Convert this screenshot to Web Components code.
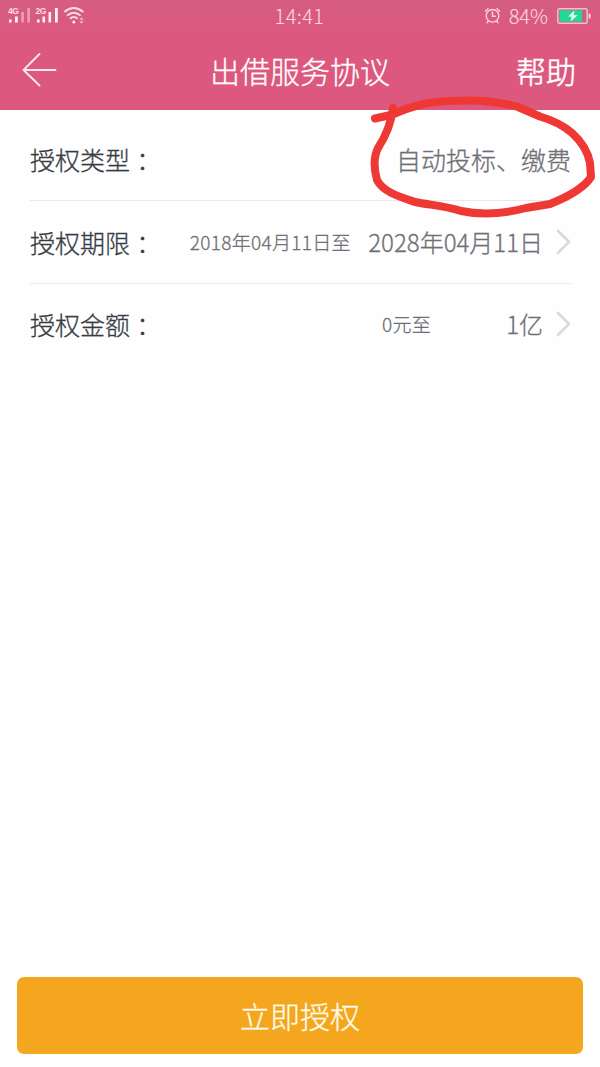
<!DOCTYPE html>
<html lang="zh-CN">
<head>
<meta charset="utf-8">
<title>出借服务协议</title>
<style>
html,body{margin:0;height:100%}
body{background:#fefefe;font-family:"Noto Sans CJK SC","Noto Sans",sans-serif;font-weight:300;-webkit-text-stroke:.3px currentColor}
</style>
</head>
<body>
<agreement-page></agreement-page>
<script>
function define(name, html) {
  const t = document.createElement('template');
  t.innerHTML = html;
  customElements.define(name, class extends HTMLElement {
    constructor() {
      super();
      this.attachShadow({mode: 'open'}).appendChild(t.content.cloneNode(true));
    }
  });
}

define('status-bar', `
<style>
:host{display:grid;grid-template-columns:1fr auto 1fr;align-items:center;height:32px;padding:0 9px 0 8px;color:#f9d3df;box-sizing:border-box;font-size:20px;line-height:32px;-webkit-text-stroke-width:.15px}
.l,.r{display:flex;align-items:center}
.r{justify-content:flex-end}
svg{display:block}
.time{letter-spacing:.4px}
.g{font:bold 8.500px "Liberation Sans",sans-serif;fill:#fbdde6;letter-spacing:-.5px;-webkit-text-stroke-width:0}
.pct{margin:0 9px 0 8px}
</style>
<div class="l">
<svg width="80" height="32" viewBox="8 0 80 32">
  <g fill="#fff0f5"><rect x="9" y="19.5" width="2.6" height="3"/><rect x="15" y="16.5" width="2.8" height="6"/>
  <rect x="37" y="19.5" width="2.6" height="3"/><rect x="42.5" y="16.5" width="2.6" height="6"/><rect x="48.5" y="12" width="2.6" height="10.5"/><rect x="55" y="8" width="2.8" height="14.5"/></g>
  <g fill="#ed9db7"><rect x="21.300" y="12" width="2.6" height="10.500"/><rect x="27.300" y="8" width="2.600" height="14.500"/></g>
  <text class="g" x="8" y="13.500">4G</text><text class="g" x="35.500" y="13.500">2G</text>
  <g fill="none" stroke="#fbdde6" stroke-width="1.900"><path d="M64.300 12Q73.800 4.200 83.300 12M67 15.600Q73.800 9.800 80.600 15.600M70 18.800Q73.800 15.400 77.600 18.800"/></g>
  <circle cx="73.800" cy="22" r="1.500" fill="#fff0f5"/>
  <path d="M79.300 19.800L81.500 17.300 83.700 19.800ZM79.300 21.300L81.500 23.800 83.700 21.300Z" fill="#f2b4c8"/>
</svg></div>
<span class="time">14:41</span>
<div class="r">
<svg width="17" height="18" viewBox="0 0 17 18" fill="none" stroke="#f9d3df" stroke-width="1.400" stroke-linecap="round"><circle cx="8.500" cy="8.800" r="6.300"/><path d="M8.500 5V9.300H11.300M1.300 4.200L4 1.800M15.700 4.200L13 1.800M4.300 14L3 15.700M12.700 14L14 15.700"/></svg>
<span class="pct">84%</span>
<svg width="34" height="16" viewBox="0 0 34 16"><rect x=".8" y=".8" width="29.400" height="14.400" rx="1.500" fill="none" stroke="#f3c0cf" stroke-width="1.400"/><rect x="2.400" y="2.400" width="22.600" height="11.200" fill="#20d995"/><rect x="25" y="2.400" width="3.600" height="11.200" fill="#bd6583"/><rect x="31.600" y="5.800" width="2" height="4.600" fill="#f9d3df"/><path d="M17.500 2.500L11 8.500H14.700L13.500 13.500 20.500 7.300H16.500Z" fill="#f5fff9"/></svg>
</div>`);

define('back-arrow', `
<style>:host{display:block}svg{display:block}</style>
<svg width="35" height="34" viewBox="0 0 35 34" fill="none" stroke="#ffe9f0" stroke-width="1.800" stroke-linecap="round" stroke-linejoin="round"><path d="M17.500 1L1.500 17 17.500 32.500M1.500 17H33.500"/></svg>`);

define('nav-bar', `
<style>
:host{display:grid;grid-template-columns:1fr auto 1fr;align-items:center;height:78px;padding:0 24px 2px 22px;box-sizing:border-box;color:#fff;font-size:30px;line-height:44px}
.title{padding-left:2px}
.help{justify-self:end;-webkit-text-stroke-width:.55px}
</style>
<back-arrow></back-arrow><span class="title"><slot></slot></span><span class="help"><slot name="action"></slot></span>`);

define('app-header', `
<style>:host{display:block;height:110px;background:linear-gradient(#d65d83,#dc587e 34px)}</style><slot></slot>`);

define('form-row', `
<style>
:host{display:flex;align-items:center;height:82.500px;border-bottom:1px solid #e9e9eb;box-sizing:border-box;color:#6e7076;font-size:24px;line-height:36px}
:host([first]){height:91px;padding-top:8px;font-size:25px}
:host([last]){border-bottom-color:transparent}
.label{flex:1;color:#373b43;font-size:25px;white-space:nowrap}
</style>
<span class="label"><slot name="label"></slot></span><slot></slot>`);

define('label-colon', `
<style>:host{display:inline-block;line-height:1;vertical-align:-1px;font-family:"Noto Sans CJK TC",sans-serif}</style><span lang="zh-TW"><slot></slot></span>`);

define('range-start', `
<style>:host{display:block;font-size:19px;letter-spacing:.3px;margin-right:var(--gap,17.500px)}</style><slot></slot>`);

define('row-chevron', `
<style>:host{display:block;margin-left:13px}svg{display:block}</style>
<svg width="15" height="26" viewBox="0 0 15 26" fill="none" stroke="#d8d9dc" stroke-width="2.600" stroke-linecap="round" stroke-linejoin="round"><path d="M2 2L13 12.800 2 23.800"/></svg>`);

define('primary-button', `
<style>
:host{display:block}
button{display:block;width:100%;height:77px;border:0;border-radius:7px;background:#f4a61f;color:#fffbe9;font:300 30px/44px "Noto Sans CJK SC",sans-serif;padding:0 0 1px}
</style><button><slot></slot></button>`);

define('ink-circle', `
<style>:host{position:absolute;left:0;top:0;pointer-events:none}svg{display:block}</style>
<svg width="600" height="230" fill="none" stroke="#ee3834" stroke-width="8" stroke-linecap="round" stroke-linejoin="round"><path d="M375 118.500L393 114.500C402 110 415 106 425 103.500C440 101 454 100.500 468 100.500C485 100.500 504 103 518 107L540 116.500C552 120 564 126 572 133C581 141 588 152 590 163L591 177C584 188 565 198 550 204L526 208C503 214 480 215 461 211C446 206 430 205 415 202C400 197 383 192 377 180C374 169 373 158 378 148C386 136 391 124 393 108"/></svg>`);

define('agreement-page', `
<style>
:host{display:flex;flex-direction:column;position:relative;height:1067px;overflow:hidden}
main{flex:1;padding:0 29px 0 30px}
footer{padding:0 17px 13px 17px}
.amount{--gap:75px}
</style>
<app-header><status-bar></status-bar><nav-bar>出借服务协议<span slot="action">帮助</span></nav-bar></app-header>
<main>
<form-row first><span slot="label">授权类型<label-colon>：</label-colon></span><span>自动投标、缴费</span></form-row>
<form-row><span slot="label">授权期限<label-colon>：</label-colon></span><range-start>2018年04月11日至</range-start><span>2028年04月11日</span><row-chevron></row-chevron></form-row>
<form-row last><span slot="label">授权金额<label-colon>：</label-colon></span><range-start class="amount">0元至</range-start><span>1亿</span><row-chevron></row-chevron></form-row>
</main>
<footer><primary-button>立即授权</primary-button></footer>
<ink-circle></ink-circle>`);
</script>
</body>
</html>
